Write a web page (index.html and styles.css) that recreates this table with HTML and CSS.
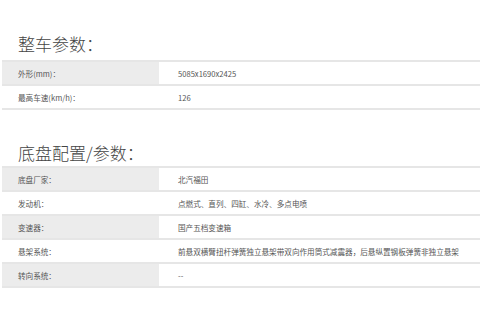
FILE: index.html
```html
<!DOCTYPE html>
<html lang="zh-CN">
<head>
  <meta charset="UTF-8" />
  <title>车型参数</title>
  <link rel="stylesheet" href="styles.css">
</head>
<body>

<h2 class="sec-title first">整车参数：</h2>
<table class="params">
  <tr><th>外形(mm)：</th><td>5085x1690x2425</td></tr>
  <tr><th>最高车速(km/h)：</th><td>126</td></tr>
</table>

<h2 class="sec-title second">底盘配置/参数：</h2>
<table class="params">
  <tr><th>底盘厂家：</th><td>北汽福田</td></tr>
  <tr><th>发动机：</th><td>点燃式、直列、四缸、水冷、多点电喷</td></tr>
  <tr><th>变速器：</th><td>国产五档变速箱</td></tr>
  <tr><th>悬架系统：</th><td>前悬双横臂扭杆弹簧独立悬架带双向作用筒式减震器，后悬纵置钢板弹簧非独立悬架</td></tr>
  <tr><th>转向系统：</th><td>--</td></tr>
</table>

</body>
</html>
```

FILE: styles.css
```css
body { margin: 0; background: #fff; font-family: "Noto Sans CJK SC", "Liberation Sans", sans-serif; color: #555; }
.sec-title { font-size: 17px; font-weight: 300; line-height: 24px; color: #444; margin: 0; padding-left: 18px; }
.sec-title.first { margin-top: 32px; margin-bottom: 4px; }
.sec-title.second { margin-top: 31px; margin-bottom: 1px; }
.params { width: 478px; margin-left: 2px; border-collapse: collapse; font-size: 7.6px; }
.params tr { border-top: 2px solid #e6e6e6; border-bottom: 2px solid #e6e6e6; }
.params th, .params td { height: 22px; padding: 0; text-align: left; vertical-align: middle; font-weight: normal; }
.params th { width: 141px; padding-left: 16px; color: #555; }
.params td { padding-left: 19px; color: #555; }
.params tr:nth-child(odd) th { background: #ececec; }
```
